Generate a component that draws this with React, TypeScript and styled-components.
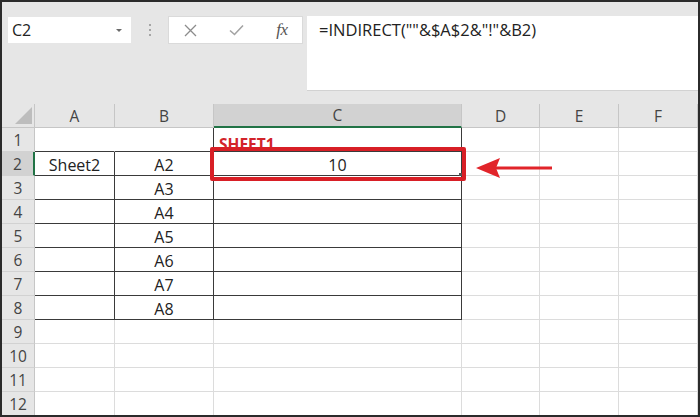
import styled, { createGlobalStyle } from 'styled-components';

const FONT = `"Open Sans", "Noto Sans", "Liberation Sans", sans-serif`;

const GlobalStyle = createGlobalStyle`
  body {
    margin: 0;
    background: #ffffff;
  }
`;

type Edge = 'grid' | 'dark' | 'none' | 'head' | 'rowhead' | 'green';

const edgeColor: Record<Edge, string> = {
  grid: '#dcdcdc',
  dark: '#3a3a3a',
  none: 'transparent',
  head: '#c6c6c6',
  rowhead: '#d2d2d2',
  green: '#217346',
};

const Frame = styled.div`
  width: 700px;
  height: 417px;
  box-sizing: border-box;
  border: 2px solid #2b2b2b;
  background: #e6e6e6;
  overflow: hidden;
  display: flex;
  flex-direction: column;
  font-family: ${FONT};
`;

const Toolbar = styled.div`
  flex: none;
  height: 102px;
  box-sizing: border-box;
  padding: 14px 0 0 6px;
  display: flex;
  align-items: flex-start;
`;

const NameBox = styled.div`
  width: 123px;
  height: 26px;
  margin-top: 1px;
  box-sizing: border-box;
  padding: 0 9px 0 4px;
  background: #ffffff;
  display: flex;
  align-items: center;
  justify-content: space-between;
  font-size: 16px;
  color: #222;
`;

const Caret = styled.span`
  width: 0;
  height: 0;
  border-left: 3px solid transparent;
  border-right: 3px solid transparent;
  border-top: 3px solid #6a6a6a;
`;

const Dots = styled.div`
  margin: 8px 17px 0 18px;
  display: flex;
  flex-direction: column;
  gap: 3px;

  span {
    width: 2px;
    height: 2px;
    background: #a5a5a5;
  }
`;

const FxBox = styled.div`
  width: 135px;
  height: 28px;
  box-sizing: border-box;
  border: 1px solid #dadada;
  background: #ffffff;
  display: flex;
  align-items: center;
  gap: 26px;
  padding-left: 11px;
`;

const FxItem = styled.div`
  width: 20px;
  display: flex;
  justify-content: center;
  align-items: center;
`;

const FxLabel = styled.span`
  font-family: "Liberation Serif", "DejaVu Serif", serif;
  font-style: italic;
  font-size: 17px;
  color: #555;
  letter-spacing: -0.5px;
`;

const FormulaBar = styled.div`
  flex: 1;
  height: 75px;
  margin-left: 4px;
  box-sizing: border-box;
  padding: 4px 12px;
  background: #ffffff;
  border-bottom: 1px solid #d2d2d2;
  font-size: 16.5px;
  line-height: 20px;
  color: #222;
  white-space: pre;
`;

const Sheet = styled.div`
  position: relative;
  flex: 1;
  display: grid;
  grid-template-columns: 33px 80px 99px 248px 78px 79px 1fr;
  grid-auto-rows: 24px;
  background: #ffffff;
`;

const Cell = styled.div<{ $right: Edge; $bottom: Edge; $bg?: string; $head?: boolean }>`
  box-sizing: border-box;
  border-right: ${(p) => (p.$right === 'green' ? 2 : 1)}px solid ${(p) => edgeColor[p.$right]};
  border-bottom: ${(p) => (p.$bottom === 'green' ? 2 : 1)}px solid ${(p) => edgeColor[p.$bottom]};
  background: ${(p) => p.$bg || '#ffffff'};
  display: flex;
  align-items: center;
  justify-content: center;
  padding-top: ${(p) => (p.$head ? 0 : 2)}px;
  font-size: ${(p) => (p.$head ? 15.5 : 16)}px;
  color: ${(p) => (p.$head ? '#444' : '#222')};
  overflow: visible;
  white-space: nowrap;
`;

const Corner = styled(Cell)`
  position: relative;

  &::after {
    content: '';
    position: absolute;
    right: 2px;
    bottom: 3px;
    width: 17px;
    height: 17px;
    background: #bdbdbd;
    clip-path: polygon(100% 0, 100% 100%, 0 100%);
  }
`;

const LabelCell = styled(Cell)`
  justify-content: flex-start;
  align-items: flex-end;
  padding: 0 0 0 5px;
`;

const RedLabel = styled.span`
  font-weight: 700;
  font-size: 15.5px;
  line-height: 16px;
  margin-bottom: -1px;
  color: #d2232a;
`;

const Highlight = styled.div`
  position: absolute;
  left: 208px;
  top: 43px;
  width: 256px;
  height: 34px;
  box-sizing: border-box;
  border: 4px solid #d81f26;
  border-radius: 2px;
`;

const FillHandle = styled.div`
  position: absolute;
  left: 457px;
  top: 69px;
  width: 3px;
  height: 3px;
  background: #555;
`;

const Arrow = styled.svg`
  position: absolute;
  left: 469px;
  top: 49px;
`;

const cols = ['A', 'B', 'C', 'D', 'E', 'F'];

const values: Record<string, string> = {
  A2: 'Sheet2',
  B2: 'A2',
  C2: '10',
  B3: 'A3',
  B4: 'A4',
  B5: 'A5',
  B6: 'A6',
  B7: 'A7',
  B8: 'A8',
};

const edges = (ci: number, r: number): [Edge, Edge] => {
  const inTable = r >= 2 && r <= 8 && ci <= 2;
  if (inTable) return ['dark', 'dark'];
  if (r === 1 && ci === 0) return ['none', 'dark'];
  if (r === 1 && ci <= 2) return ['dark', 'dark'];
  return ['grid', 'grid'];
};

const rows = Array.from({ length: 12 }, (_, i) => i + 1);

export default function App() {
  return (
    <>
      <GlobalStyle />
      <Frame>
        <Toolbar>
          <NameBox>
            C2
            <Caret />
          </NameBox>
          <Dots>
            <span />
            <span />
            <span />
          </Dots>
          <FxBox>
            <FxItem>
              <svg width="13" height="13" viewBox="0 0 13 13">
                <path d="M1 1 L12 12 M12 1 L1 12" stroke="#8c8c8c" strokeWidth="1.3" fill="none" />
              </svg>
            </FxItem>
            <FxItem>
              <svg width="15" height="12" viewBox="0 0 15 12">
                <path d="M1 6.5 L5.5 10.5 L14 1.5" stroke="#a3a3a3" strokeWidth="1.6" fill="none" />
              </svg>
            </FxItem>
            <FxItem>
              <FxLabel>fx</FxLabel>
            </FxItem>
          </FxBox>
          <FormulaBar>{'=INDIRECT(""&$A$2&"!"&B2)'}</FormulaBar>
        </Toolbar>

        <Sheet>
          <Corner $right="head" $bottom="head" $bg="#e6e6e6" $head />
          {cols.map((c) => (
            <Cell
              key={c}
              $head
              $right="head"
              $bottom={c === 'C' ? 'green' : 'head'}
              $bg={c === 'C' ? '#d2d2d2' : '#e6e6e6'}
            >
              {c}
            </Cell>
          ))}

          {rows.map((r) => [
            <Cell
              key={`h${r}`}
              $head
              $right={r === 2 ? 'green' : 'head'}
              $bottom="rowhead"
              $bg={r === 2 ? '#d2d2d2' : '#e6e6e6'}
            >
              {r}
            </Cell>,
            ...cols.map((c, ci) => {
              const [right, bottom] = edges(ci, r);
              const id = `${c}${r}`;
              if (id === 'C1') {
                return (
                  <LabelCell key={id} $right={right} $bottom={bottom}>
                    <RedLabel>SHEET1</RedLabel>
                  </LabelCell>
                );
              }
              return (
                <Cell key={id} $right={right} $bottom={bottom}>
                  {values[id]}
                </Cell>
              );
            }),
          ])}

          <Highlight />
          <FillHandle />
          <Arrow width="84" height="30" viewBox="0 0 84 30">
            <path d="M5 15 L29 5 L25 15 L29 25 Z" fill="#e1242a" />
            <rect x="24" y="13.5" width="57" height="3" fill="#e1242a" />
          </Arrow>
        </Sheet>
      </Frame>
    </>
  );
}
